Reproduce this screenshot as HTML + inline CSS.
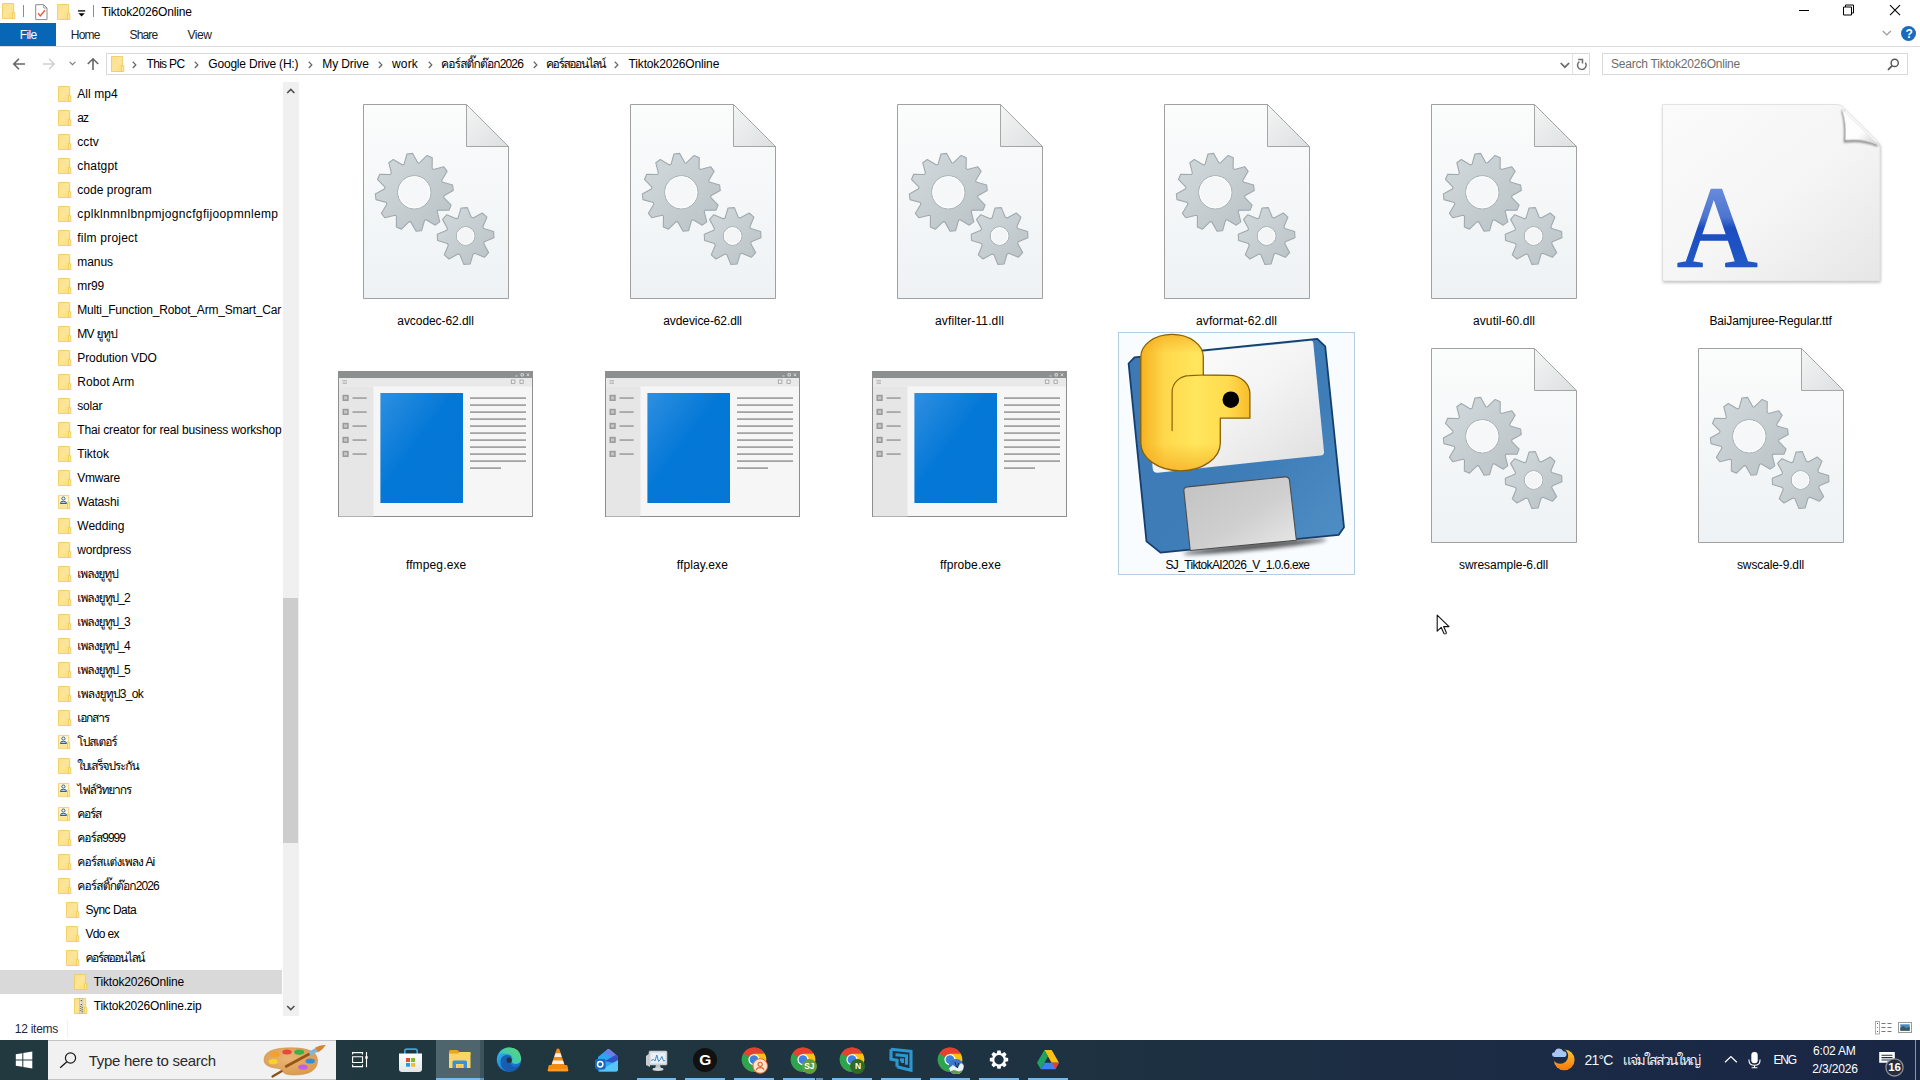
<!DOCTYPE html>
<html lang="en"><head><meta charset="utf-8"><title>Tiktok2026Online</title>
<style>
html,body{margin:0;padding:0}
body{width:1920px;height:1080px;overflow:hidden;background:#fff;position:relative;font-family:"Liberation Sans","Loma","Noto Sans CJK SC",sans-serif;font-size:12px}
.t{position:absolute;white-space:pre;display:block}
.b{position:absolute;display:block;overflow:visible}
</style></head>
<body>

<svg width="0" height="0" style="position:absolute">
<defs>
<linearGradient id="gfold" x1="0" y1="0" x2="1" y2="1"><stop offset="0" stop-color="#fbe08a"/><stop offset=".5" stop-color="#fce59a"/><stop offset="1" stop-color="#f9dc7d"/></linearGradient>
<linearGradient id="gpage" x1="0" y1="0" x2="0" y2="1"><stop offset="0" stop-color="#fbfcfc"/><stop offset="1" stop-color="#eef2f4"/></linearGradient>
<linearGradient id="gfoldc" x1="0" y1="0" x2="1" y2="1"><stop offset="0" stop-color="#f4f5f5"/><stop offset="1" stop-color="#dcdfe0"/></linearGradient>
<linearGradient id="ggear" x1="0" y1="0" x2="1" y2="1"><stop offset="0" stop-color="#d3dadd"/><stop offset="1" stop-color="#b9c2c6"/></linearGradient>
<linearGradient id="gblue" x1="0" y1="0" x2="1" y2="1"><stop offset="0" stop-color="#2f8fe0"/><stop offset=".45" stop-color="#0478d7"/><stop offset="1" stop-color="#0576d4"/></linearGradient>
<symbol id="fold" viewBox="0 0 14 16"><path d="M.5.5h11.2v15H.5z" fill="url(#gfold)" stroke="#efcd63" stroke-width=".9"/><path d="M10.6 9.6h2.2v5.9h-2.2z" fill="#fdeaa5" stroke="#ecc652" stroke-width=".8"/></symbol>
</defs></svg>

<svg class="b" style="left:1.9px;top:3.2px" width="14" height="16"><use href="#fold"/></svg>
<div class="b" style="left:23px;top:5px;width:1px;height:12px;background:#8c8c8c;"></div>
<svg class="b" style="left:34.5px;top:3.5px;" width="13" height="17" viewBox="0 0 13 17"><path d="M.7.7h8l3.3 3.3v11.6H.7z" fill="#fff" stroke="#8a8a8a" stroke-width="1"/><path d="M8.7.7v3.3h3.3" fill="none" stroke="#8a8a8a" stroke-width=".8"/><path d="M3 9.3l2.3 2.6 4.6-5.6" fill="none" stroke="#e8603c" stroke-width="1.5"/></svg>
<svg class="b" style="left:57px;top:4px" width="14" height="16"><use href="#fold"/></svg>
<svg class="b" style="left:78px;top:9.5px;" width="8" height="7" viewBox="0 0 8 7"><path d="M0 .9h7.2" stroke="#000" stroke-width="1.3"/><path d="M.4 3.3h6.4L3.6 6.6z" fill="#000"/></svg>
<div class="b" style="left:93px;top:5px;width:1px;height:12px;background:#8c8c8c;"></div>
<span class="t" style="left:101.50px;top:2.64px;font-size:12px;line-height:18px;color:#000;letter-spacing:-0.166px;">Tiktok2026Online</span>
<svg class="b" style="left:1798px;top:4px;" width="12" height="12" viewBox="0 0 12 12"><path d="M1 6.5h10" stroke="#000" stroke-width="1"/></svg>
<svg class="b" style="left:1843px;top:4px;" width="12" height="12" viewBox="0 0 12 12"><path d="M.5 3h8v8h-8z" fill="none" stroke="#000" stroke-width="1"/><path d="M2.5 3V1h8v8h-2" fill="none" stroke="#000" stroke-width="1"/></svg>
<svg class="b" style="left:1889px;top:4px;" width="12" height="12" viewBox="0 0 12 12"><path d="M1 1.2l10 10M11 1.2l-10 10" stroke="#000" stroke-width="1.1"/></svg>
<div class="b" style="left:0px;top:23px;width:56px;height:23px;background:#0766b5;"></div>
<span class="t" style="left:19.80px;top:26.24px;font-size:12px;line-height:18px;color:#fff;letter-spacing:-0.636px;">File</span>
<span class="t" style="left:70.80px;top:26.24px;font-size:12px;line-height:18px;color:#222;letter-spacing:-0.829px;">Home</span>
<span class="t" style="left:129.50px;top:26.24px;font-size:12px;line-height:18px;color:#222;letter-spacing:-0.846px;">Share</span>
<span class="t" style="left:187.50px;top:26.24px;font-size:12px;line-height:18px;color:#222;letter-spacing:-0.449px;">View</span>
<div class="b" style="left:0px;top:46px;width:1920px;height:1px;background:#dadbdc;"></div>
<svg class="b" style="left:1882px;top:30px;" width="10" height="7" viewBox="0 0 10 7"><path d="M.8 1l4 4 4-4" fill="none" stroke="#9a9a9a" stroke-width="1.2"/></svg>
<div class="b" style="left:1901px;top:26px;width:15px;height:15px;border-radius:50%;background:#1a6bbf"></div>
<span class="t" style="left:1905.50px;top:24.84px;font-size:12px;line-height:18px;color:#fff;font-weight:700;">?</span>
<svg class="b" style="left:12px;top:57px;" width="14" height="14" viewBox="0 0 14 14"><path d="M13 7H2M7 1.8L1.8 7 7 12.2" fill="none" stroke="#666" stroke-width="1.600"/></svg>
<svg class="b" style="left:42px;top:57px;" width="14" height="14" viewBox="0 0 14 14"><path d="M1 7h11M7 1.8L12.2 7 7 12.2" fill="none" stroke="#d0d0d0" stroke-width="1.4"/></svg>
<svg class="b" style="left:69px;top:61px;" width="7" height="5" viewBox="0 0 7 5"><path d="M.6.8l2.9 2.9L6.4.8" fill="none" stroke="#7a7a7a" stroke-width="1.1"/></svg>
<svg class="b" style="left:86px;top:57px;" width="14" height="14" viewBox="0 0 14 14"><path d="M7 13V2M1.8 7L7 1.8 12.2 7" fill="none" stroke="#666" stroke-width="1.600"/></svg>
<div class="b" style="left:106px;top:53px;width:1484px;height:22px;background:#fff;border:1px solid #d9d9d9;box-sizing:border-box;"></div>
<div class="b" style="left:1572px;top:54px;width:1px;height:20px;background:#e3e3e3;"></div>
<svg class="b" style="left:111px;top:55.5px" width="14" height="16"><use href="#fold"/></svg>
<svg class="b" style="left:132px;top:61px;" width="5" height="8" viewBox="0 0 5 8"><path d="M.8.8l3 3.1-3 3.1" fill="none" stroke="#666" stroke-width="1.300"/></svg>
<span class="t" style="left:146.50px;top:55.04px;font-size:12px;line-height:18px;color:#000;letter-spacing:-0.684px;">This PC</span>
<svg class="b" style="left:194px;top:61px;" width="5" height="8" viewBox="0 0 5 8"><path d="M.8.8l3 3.1-3 3.1" fill="none" stroke="#666" stroke-width="1.300"/></svg>
<span class="t" style="left:208.30px;top:55.04px;font-size:12px;line-height:18px;color:#000;letter-spacing:-0.198px;">Google Drive (H:)</span>
<svg class="b" style="left:308px;top:61px;" width="5" height="8" viewBox="0 0 5 8"><path d="M.8.8l3 3.1-3 3.1" fill="none" stroke="#666" stroke-width="1.300"/></svg>
<span class="t" style="left:322.30px;top:55.04px;font-size:12px;line-height:18px;color:#000;letter-spacing:-0.105px;">My Drive</span>
<svg class="b" style="left:378px;top:61px;" width="5" height="8" viewBox="0 0 5 8"><path d="M.8.8l3 3.1-3 3.1" fill="none" stroke="#666" stroke-width="1.300"/></svg>
<span class="t" style="left:392.00px;top:55.04px;font-size:12px;line-height:18px;color:#000;letter-spacing:0.164px;">work</span>
<svg class="b" style="left:427.5px;top:61px;" width="5" height="8" viewBox="0 0 5 8"><path d="M.8.8l3 3.1-3 3.1" fill="none" stroke="#666" stroke-width="1.300"/></svg>
<span class="t" style="left:441.00px;top:55.04px;font-size:12px;line-height:18px;color:#000;letter-spacing:-0.849px;">คอร์สติ๊กต๊อก2026</span>
<svg class="b" style="left:532.5px;top:61px;" width="5" height="8" viewBox="0 0 5 8"><path d="M.8.8l3 3.1-3 3.1" fill="none" stroke="#666" stroke-width="1.300"/></svg>
<span class="t" style="left:546.00px;top:55.04px;font-size:12px;line-height:18px;color:#000;letter-spacing:-1.422px;">คอร์สออนไลน์</span>
<svg class="b" style="left:614px;top:61px;" width="5" height="8" viewBox="0 0 5 8"><path d="M.8.8l3 3.1-3 3.1" fill="none" stroke="#666" stroke-width="1.300"/></svg>
<span class="t" style="left:628.50px;top:55.04px;font-size:12px;line-height:18px;color:#000;letter-spacing:-0.141px;">Tiktok2026Online</span>
<svg class="b" style="left:1560px;top:61px;" width="10" height="8" viewBox="0 0 10 8"><path d="M.7 2l4.200 4.200L9.100 2" fill="none" stroke="#6a6a6a" stroke-width="1.700"/></svg>
<svg class="b" style="left:1575px;top:56px;" width="14" height="16" viewBox="1575 56 14 16"><path d="M1585.300 62.600A4.300 4.300 0 1 1 1579.400 61.600" fill="none" stroke="#717171" stroke-width="1.500"/><path d="M1578.100 59.500H1582.500V63.400" fill="none" stroke="#717171" stroke-width="1.500"/></svg>
<div class="b" style="left:1602px;top:53px;width:306px;height:22px;background:#fff;border:1px solid #d9d9d9;box-sizing:border-box;"></div>
<span class="t" style="left:1611.00px;top:55.04px;font-size:12px;line-height:18px;color:#6d6d6d;letter-spacing:-0.221px;">Search Tiktok2026Online</span>
<svg class="b" style="left:1887px;top:58px;" width="13" height="13" viewBox="0 0 13 13"><circle cx="7.7" cy="4.9" r="3.6" fill="none" stroke="#555" stroke-width="1.4"/><path d="M5.2 7.6L1 11.8" stroke="#555" stroke-width="1.7"/></svg>
<div class="b" style="left:0px;top:970px;width:282px;height:23.6px;background:#d9d9d9;"></div>
<svg class="b" style="left:58px;top:86px" width="14" height="16"><use href="#fold"/></svg>
<span class="t" style="left:77.30px;top:84.64px;font-size:12px;line-height:18px;color:#000;letter-spacing:0.069px;">All mp4</span>
<svg class="b" style="left:58px;top:110px" width="14" height="16"><use href="#fold"/></svg>
<span class="t" style="left:77.30px;top:108.64px;font-size:12px;line-height:18px;color:#000;letter-spacing:-1.094px;">az</span>
<svg class="b" style="left:58px;top:134px" width="14" height="16"><use href="#fold"/></svg>
<span class="t" style="left:77.30px;top:132.64px;font-size:12px;line-height:18px;color:#000;letter-spacing:0.064px;">cctv</span>
<svg class="b" style="left:58px;top:158px" width="14" height="16"><use href="#fold"/></svg>
<span class="t" style="left:77.30px;top:156.64px;font-size:12px;line-height:18px;color:#000;letter-spacing:0.161px;">chatgpt</span>
<svg class="b" style="left:58px;top:182px" width="14" height="16"><use href="#fold"/></svg>
<span class="t" style="left:77.30px;top:180.64px;font-size:12px;line-height:18px;color:#000;letter-spacing:0.038px;">code program</span>
<svg class="b" style="left:58px;top:206px" width="14" height="16"><use href="#fold"/></svg>
<span class="t" style="left:77.30px;top:204.64px;font-size:12px;line-height:18px;color:#000;letter-spacing:0.343px;">cplklnmnlbnpmjogncfgfijoopmnlemp</span>
<svg class="b" style="left:58px;top:230px" width="14" height="16"><use href="#fold"/></svg>
<span class="t" style="left:77.30px;top:228.64px;font-size:12px;line-height:18px;color:#000;letter-spacing:0.207px;">film project</span>
<svg class="b" style="left:58px;top:254px" width="14" height="16"><use href="#fold"/></svg>
<span class="t" style="left:77.30px;top:252.64px;font-size:12px;line-height:18px;color:#000;letter-spacing:-0.086px;">manus</span>
<svg class="b" style="left:58px;top:278px" width="14" height="16"><use href="#fold"/></svg>
<span class="t" style="left:77.30px;top:276.64px;font-size:12px;line-height:18px;color:#000;letter-spacing:-0.161px;">mr99</span>
<svg class="b" style="left:58px;top:302px" width="14" height="16"><use href="#fold"/></svg>
<span class="t" style="left:77.30px;top:300.64px;font-size:12px;line-height:18px;color:#000;letter-spacing:-0.185px;">Multi_Function_Robot_Arm_Smart_Car</span>
<svg class="b" style="left:58px;top:326px" width="14" height="16"><use href="#fold"/></svg>
<span class="t" style="left:77.30px;top:324.64px;font-size:12px;line-height:18px;color:#000;letter-spacing:-0.684px;">MV ยูทูป</span>
<svg class="b" style="left:58px;top:350px" width="14" height="16"><use href="#fold"/></svg>
<span class="t" style="left:77.30px;top:348.64px;font-size:12px;line-height:18px;color:#000;letter-spacing:-0.101px;">Prodution VDO</span>
<svg class="b" style="left:58px;top:374px" width="14" height="16"><use href="#fold"/></svg>
<span class="t" style="left:77.30px;top:372.64px;font-size:12px;line-height:18px;color:#000;letter-spacing:0.044px;">Robot Arm</span>
<svg class="b" style="left:58px;top:398px" width="14" height="16"><use href="#fold"/></svg>
<span class="t" style="left:77.30px;top:396.64px;font-size:12px;line-height:18px;color:#000;letter-spacing:-0.223px;">solar</span>
<svg class="b" style="left:58px;top:422px" width="14" height="16"><use href="#fold"/></svg>
<span class="t" style="left:77.30px;top:420.64px;font-size:12px;line-height:18px;color:#000;letter-spacing:-0.151px;">Thai creator for real business workshop</span>
<svg class="b" style="left:58px;top:446px" width="14" height="16"><use href="#fold"/></svg>
<span class="t" style="left:77.30px;top:444.64px;font-size:12px;line-height:18px;color:#000;letter-spacing:0.006px;">Tiktok</span>
<svg class="b" style="left:58px;top:470px" width="14" height="16"><use href="#fold"/></svg>
<span class="t" style="left:77.30px;top:468.64px;font-size:12px;line-height:18px;color:#000;letter-spacing:-0.219px;">Vmware</span>
<svg class="b" style="left:58px;top:494.7px;" width="14" height="15" viewBox="0 0 14 15"><path d="M.5.5h10.300v13.100H.5z" fill="#fdf5d3" stroke="#f0d06c" stroke-width=".9"/><path d="M.9 9.300h9.500v3.900H.9z" fill="#fbe596"/><path d="M9.500 7.400h2.200v6.200H9.500z" fill="#fce9a3" stroke="#ecc652" stroke-width=".8"/><circle cx="5.400" cy="3.500" r="1.550" fill="#f2f8ff" stroke="#3d5878" stroke-width=".95"/><path d="M2.300 8.500Q2.300 6.300 5.400 6.300Q8.600 6.300 8.600 8.500z" fill="#a8d3f7" stroke="#2f5a8a" stroke-width=".95" stroke-linejoin="round"/></svg>
<span class="t" style="left:77.30px;top:492.64px;font-size:12px;line-height:18px;color:#000;letter-spacing:-0.187px;">Watashi</span>
<svg class="b" style="left:58px;top:518px" width="14" height="16"><use href="#fold"/></svg>
<span class="t" style="left:77.30px;top:516.64px;font-size:12px;line-height:18px;color:#000;letter-spacing:-0.008px;">Wedding</span>
<svg class="b" style="left:58px;top:542px" width="14" height="16"><use href="#fold"/></svg>
<span class="t" style="left:77.30px;top:540.64px;font-size:12px;line-height:18px;color:#000;letter-spacing:-0.173px;">wordpress</span>
<svg class="b" style="left:58px;top:566px" width="14" height="16"><use href="#fold"/></svg>
<span class="t" style="left:77.30px;top:564.64px;font-size:12px;line-height:18px;color:#000;letter-spacing:-1.042px;">เพลงยูทูป</span>
<svg class="b" style="left:58px;top:590px" width="14" height="16"><use href="#fold"/></svg>
<span class="t" style="left:77.30px;top:588.64px;font-size:12px;line-height:18px;color:#000;letter-spacing:-0.982px;">เพลงยูทูป_2</span>
<svg class="b" style="left:58px;top:614px" width="14" height="16"><use href="#fold"/></svg>
<span class="t" style="left:77.30px;top:612.64px;font-size:12px;line-height:18px;color:#000;letter-spacing:-0.982px;">เพลงยูทูป_3</span>
<svg class="b" style="left:58px;top:638px" width="14" height="16"><use href="#fold"/></svg>
<span class="t" style="left:77.30px;top:636.64px;font-size:12px;line-height:18px;color:#000;letter-spacing:-0.982px;">เพลงยูทูป_4</span>
<svg class="b" style="left:58px;top:662px" width="14" height="16"><use href="#fold"/></svg>
<span class="t" style="left:77.30px;top:660.64px;font-size:12px;line-height:18px;color:#000;letter-spacing:-0.982px;">เพลงยูทูป_5</span>
<svg class="b" style="left:58px;top:686px" width="14" height="16"><use href="#fold"/></svg>
<span class="t" style="left:77.30px;top:684.64px;font-size:12px;line-height:18px;color:#000;letter-spacing:-0.747px;">เพลงยูทูป3_ok</span>
<svg class="b" style="left:58px;top:710px" width="14" height="16"><use href="#fold"/></svg>
<span class="t" style="left:77.30px;top:708.64px;font-size:12px;line-height:18px;color:#000;letter-spacing:-1.249px;">เอกสาร</span>
<svg class="b" style="left:58px;top:734.7px;" width="14" height="15" viewBox="0 0 14 15"><path d="M.5.5h10.300v13.100H.5z" fill="#fdf5d3" stroke="#f0d06c" stroke-width=".9"/><path d="M.9 9.300h9.500v3.900H.9z" fill="#fbe596"/><path d="M9.500 7.400h2.200v6.200H9.500z" fill="#fce9a3" stroke="#ecc652" stroke-width=".8"/><circle cx="5.400" cy="3.500" r="1.550" fill="#f2f8ff" stroke="#3d5878" stroke-width=".95"/><path d="M2.300 8.500Q2.300 6.300 5.400 6.300Q8.600 6.300 8.600 8.500z" fill="#a8d3f7" stroke="#2f5a8a" stroke-width=".95" stroke-linejoin="round"/></svg>
<span class="t" style="left:77.30px;top:732.64px;font-size:12px;line-height:18px;color:#000;letter-spacing:-1.077px;">โปสเตอร์</span>
<svg class="b" style="left:58px;top:758px" width="14" height="16"><use href="#fold"/></svg>
<span class="t" style="left:77.30px;top:756.64px;font-size:12px;line-height:18px;color:#000;letter-spacing:-1.205px;">ใบเสร็จประกัน</span>
<svg class="b" style="left:58px;top:782.7px;" width="14" height="15" viewBox="0 0 14 15"><path d="M.5.5h10.300v13.100H.5z" fill="#fdf5d3" stroke="#f0d06c" stroke-width=".9"/><path d="M.9 9.300h9.500v3.900H.9z" fill="#fbe596"/><path d="M9.500 7.400h2.200v6.200H9.500z" fill="#fce9a3" stroke="#ecc652" stroke-width=".8"/><circle cx="5.400" cy="3.500" r="1.550" fill="#f2f8ff" stroke="#3d5878" stroke-width=".95"/><path d="M2.300 8.500Q2.300 6.300 5.400 6.300Q8.600 6.300 8.600 8.500z" fill="#a8d3f7" stroke="#2f5a8a" stroke-width=".95" stroke-linejoin="round"/></svg>
<span class="t" style="left:77.30px;top:780.64px;font-size:12px;line-height:18px;color:#000;letter-spacing:-1.135px;">ไฟล์วิทยากร</span>
<svg class="b" style="left:58px;top:806.7px;" width="14" height="15" viewBox="0 0 14 15"><path d="M.5.5h10.300v13.100H.5z" fill="#fdf5d3" stroke="#f0d06c" stroke-width=".9"/><path d="M.9 9.300h9.500v3.900H.9z" fill="#fbe596"/><path d="M9.500 7.400h2.200v6.200H9.500z" fill="#fce9a3" stroke="#ecc652" stroke-width=".8"/><circle cx="5.400" cy="3.500" r="1.550" fill="#f2f8ff" stroke="#3d5878" stroke-width=".95"/><path d="M2.300 8.500Q2.300 6.300 5.400 6.300Q8.600 6.300 8.600 8.500z" fill="#a8d3f7" stroke="#2f5a8a" stroke-width=".95" stroke-linejoin="round"/></svg>
<span class="t" style="left:77.30px;top:804.64px;font-size:12px;line-height:18px;color:#000;letter-spacing:-1.304px;">คอร์ส</span>
<svg class="b" style="left:58px;top:830px" width="14" height="16"><use href="#fold"/></svg>
<span class="t" style="left:77.30px;top:828.64px;font-size:12px;line-height:18px;color:#000;letter-spacing:-1.013px;">คอร์ส9999</span>
<svg class="b" style="left:58px;top:854px" width="14" height="16"><use href="#fold"/></svg>
<span class="t" style="left:77.30px;top:852.64px;font-size:12px;line-height:18px;color:#000;letter-spacing:-0.895px;">คอร์สแต่งเพลง Ai</span>
<svg class="b" style="left:58px;top:878px" width="14" height="16"><use href="#fold"/></svg>
<span class="t" style="left:77.30px;top:876.64px;font-size:12px;line-height:18px;color:#000;letter-spacing:-0.879px;">คอร์สติ๊กต๊อก2026</span>
<svg class="b" style="left:66px;top:902px" width="14" height="16"><use href="#fold"/></svg>
<span class="t" style="left:85.50px;top:900.64px;font-size:12px;line-height:18px;color:#000;letter-spacing:-0.518px;">Sync Data</span>
<svg class="b" style="left:66px;top:926px" width="14" height="16"><use href="#fold"/></svg>
<span class="t" style="left:85.50px;top:924.64px;font-size:12px;line-height:18px;color:#000;letter-spacing:-0.660px;">Vdo ex</span>
<svg class="b" style="left:66px;top:950px" width="14" height="16"><use href="#fold"/></svg>
<span class="t" style="left:85.50px;top:948.64px;font-size:12px;line-height:18px;color:#000;letter-spacing:-1.472px;">คอร์สออนไลน์</span>
<svg class="b" style="left:74px;top:974px" width="14" height="16"><use href="#fold"/></svg>
<span class="t" style="left:93.70px;top:972.64px;font-size:12px;line-height:18px;color:#000;letter-spacing:-0.166px;">Tiktok2026Online</span>
<svg class="b" style="left:74px;top:997.9px;" width="14" height="16" viewBox="0 0 14 16"><path d="M.5.5h11.200v15H.5z" fill="url(#gfold)" stroke="#efcd63" stroke-width=".9"/><path d="M10.600 9.600h2.200v5.900h-2.200z" fill="#fdeaa5" stroke="#ecc652" stroke-width=".8"/><rect x="5.700" y=".3" width="3.200" height="15.300" fill="#e6e2d6" stroke="#b9ad8a" stroke-width=".5"/><circle cx="7.300" cy="2.600" r=".65" fill="#333"/><circle cx="7.300" cy="6.600" r=".65" fill="#333"/><rect x="6.2" y="8.20" width="1.100" height=".8" fill="#3a3a3a"/><rect x="7.6" y="9.25" width="1.100" height=".8" fill="#3a3a3a"/><rect x="6.2" y="10.30" width="1.100" height=".8" fill="#3a3a3a"/><rect x="7.6" y="11.35" width="1.100" height=".8" fill="#3a3a3a"/><rect x="6.2" y="12.40" width="1.100" height=".8" fill="#3a3a3a"/><rect x="7.6" y="13.45" width="1.100" height=".8" fill="#3a3a3a"/></svg>
<span class="t" style="left:93.70px;top:996.64px;font-size:12px;line-height:18px;color:#000;letter-spacing:-0.186px;">Tiktok2026Online.zip</span>
<div class="b" style="left:282px;top:82px;width:40px;height:936px;background:#fff;"></div>
<div class="b" style="left:283px;top:82px;width:16px;height:934px;background:#f0f0f0;"></div>
<div class="b" style="left:283px;top:598px;width:15px;height:245px;background:#cdcdcd;"></div>
<svg class="b" style="left:286px;top:87px;" width="10" height="8" viewBox="0 0 10 8"><path d="M1.2 6l3.6-3.6L8.4 6" fill="none" stroke="#505050" stroke-width="1.6"/></svg>
<svg class="b" style="left:286px;top:1004px;" width="10" height="8" viewBox="0 0 10 8"><path d="M1.2 2l3.6 3.6L8.4 2" fill="none" stroke="#505050" stroke-width="1.6"/></svg>
<span class="t" style="left:14.80px;top:1019.84px;font-size:12px;line-height:18px;color:#1f2540;letter-spacing:-0.257px;">12 items</span>
<div class="b" style="left:67px;top:1020px;width:1px;height:17px;background:#f0f0f0;"></div>
<svg class="b" style="left:1875px;top:1021px;" width="17" height="14" viewBox="0 0 17 14"><rect x=".5" y=".5" width="4" height="12.5" fill="#fff" stroke="#9a9a9a" stroke-width=".8"/><path d="M6.5 2.5h4M12.5 2.5h4M6.5 6.5h4M12.5 6.5h4M6.5 10.5h4M12.5 10.5h4" stroke="#777" stroke-width="1.2"/><rect x="2" y="2" width="1" height="1" fill="#555"/><rect x="2" y="6" width="1" height="1" fill="#6a9"/><rect x="2" y="10" width="1" height="1" fill="#a44"/></svg>
<svg class="b" style="left:1898px;top:1022px;" width="14" height="11" viewBox="0 0 14 11"><rect x=".5" y=".5" width="13" height="10" fill="#fff" stroke="#9a9a9a" stroke-width="1"/><rect x="2.3" y="2.3" width="9.4" height="6.4" fill="#4a88c2"/><path d="M2.3 8.7V6l3-2 3 2.2 3.4-1.5v4z" fill="#3c5a5c"/></svg>
<svg width="0" height="0" style="position:absolute"><defs><symbol id="dll" viewBox="0 0 147 196" overflow="visible">
<path d="M.5.5H103.5L145.5 42.5V194.5H.5z" fill="url(#gpage)" stroke="#a0a0a0" stroke-width="1"/>
<path d="M103.5.5V42.5H145.5z" fill="url(#gfoldc)" stroke="#a6a6a6" stroke-width="1" stroke-linejoin="round"/>
<path d="M41.03 60.33L43.98 49.99L49.54 49.34L54.81 58.71A29.8 29.8 0 0 1 56.39 58.94L64.12 51.47L69.26 53.68L69.13 64.43A29.8 29.8 0 0 1 70.39 65.42L80.82 62.81L84.16 67.30L78.68 76.54A29.8 29.8 0 0 1 79.27 78.03L89.61 80.98L90.26 86.54L80.89 91.81A29.8 29.8 0 0 1 80.66 93.39L88.13 101.12L85.92 106.26L75.17 106.13A29.8 29.8 0 0 1 74.18 107.39L76.79 117.82L72.30 121.16L63.06 115.68A29.8 29.8 0 0 1 61.57 116.27L58.62 126.61L53.06 127.26L47.79 117.89A29.8 29.8 0 0 1 46.21 117.66L38.48 125.13L33.34 122.92L33.47 112.17A29.8 29.8 0 0 1 32.21 111.18L21.78 113.79L18.44 109.30L23.92 100.06A29.8 29.8 0 0 1 23.33 98.57L12.99 95.62L12.34 90.06L21.71 84.79A29.8 29.8 0 0 1 21.94 83.21L14.47 75.48L16.68 70.34L27.43 70.47A29.8 29.8 0 0 1 28.42 69.21L25.81 58.78L30.30 55.44L39.54 60.92A29.8 29.8 0 0 1 41.03 60.33Z" fill="url(#ggear)" stroke="#a0a9ad" stroke-width="1.1" stroke-linejoin="round"/>
<circle cx="51.3" cy="88.3" r="16.6" fill="#f5f7f8" stroke="#a7b0b4" stroke-width="1"/>
<circle cx="51.3" cy="88.3" r="15.6" fill="none" stroke="#fff" stroke-width="1"/>
<path d="M95.14 113.88L98.08 103.96L104.36 103.65L108.26 113.24A19.6 19.6 0 0 1 110.14 113.91L119.23 108.98L123.89 113.20L119.87 122.73A19.6 19.6 0 0 1 120.72 124.54L130.64 127.48L130.95 133.76L121.36 137.66A19.6 19.6 0 0 1 120.69 139.54L125.62 148.63L121.40 153.29L111.87 149.27A19.6 19.6 0 0 1 110.06 150.12L107.12 160.04L100.84 160.35L96.94 150.76A19.6 19.6 0 0 1 95.06 150.09L85.97 155.02L81.31 150.80L85.33 141.27A19.6 19.6 0 0 1 84.48 139.46L74.56 136.52L74.25 130.24L83.84 126.34A19.6 19.6 0 0 1 84.51 124.46L79.58 115.37L83.80 110.71L93.33 114.73A19.6 19.6 0 0 1 95.14 113.88Z" fill="url(#ggear)" stroke="#a0a9ad" stroke-width="1.1" stroke-linejoin="round"/>
<circle cx="102.6" cy="132" r="9.3" fill="#f3f5f6" stroke="#a7b0b4" stroke-width="1"/>
<circle cx="102.6" cy="132" r="8.3" fill="none" stroke="#fff" stroke-width="1"/>
</symbol><symbol id="exe" viewBox="0 0 195 146" overflow="visible">
<rect x=".5" y=".5" width="194" height="145" fill="#f6f6f6" stroke="#8e8e8e" stroke-width="1"/>
<rect x="1" y="1" width="193" height="6" fill="#8c8f90"/>
<rect x="1" y="7" width="193" height="8.4" fill="#e9e9e9"/>
<rect x="1" y="15.4" width="34.5" height="130" fill="#e6e6e6"/>
<rect x="42.4" y="22" width="82.6" height="110" fill="url(#gblue)"/>
<rect x="132" y="26.3" width="56" height="1.6" fill="#9b9b9b"/><rect x="132" y="33.3" width="56" height="1.6" fill="#9b9b9b"/><rect x="132" y="40.3" width="56" height="1.6" fill="#9b9b9b"/><rect x="132" y="47.3" width="56" height="1.6" fill="#9b9b9b"/><rect x="132" y="54.3" width="56" height="1.6" fill="#9b9b9b"/><rect x="132" y="61.3" width="56" height="1.6" fill="#9b9b9b"/><rect x="132" y="68.3" width="56" height="1.6" fill="#9b9b9b"/><rect x="132" y="75.3" width="56" height="1.6" fill="#9b9b9b"/><rect x="132" y="82.3" width="56" height="1.6" fill="#9b9b9b"/><rect x="132" y="89.3" width="56" height="1.6" fill="#9b9b9b"/><rect x="132" y="96.3" width="31" height="1.6" fill="#9b9b9b"/><rect x="5.3" y="24.6" width="4.6" height="4.6" fill="#c9c9c9" stroke="#9b9b9b" stroke-width="1.6"/><rect x="14.5" y="26.3" width="14.2" height="1.5" fill="#9b9b9b"/><rect x="5.3" y="38.6" width="4.6" height="4.6" fill="#c9c9c9" stroke="#9b9b9b" stroke-width="1.6"/><rect x="14.5" y="40.3" width="14.2" height="1.5" fill="#9b9b9b"/><rect x="5.3" y="52.6" width="4.6" height="4.6" fill="#c9c9c9" stroke="#9b9b9b" stroke-width="1.6"/><rect x="14.5" y="54.3" width="14.2" height="1.5" fill="#9b9b9b"/><rect x="5.3" y="66.6" width="4.6" height="4.6" fill="#c9c9c9" stroke="#9b9b9b" stroke-width="1.6"/><rect x="14.5" y="68.3" width="14.2" height="1.5" fill="#9b9b9b"/><rect x="5.3" y="80.6" width="4.6" height="4.6" fill="#c9c9c9" stroke="#9b9b9b" stroke-width="1.6"/><rect x="14.5" y="82.3" width="14.2" height="1.5" fill="#9b9b9b"/>
<path d="M4.5 9.5h4.5M4.5 11h4.5M4.5 12.5h4.5" stroke="#aaa" stroke-width=".7"/>
<rect x="173.3" y="9" width="3.6" height="3.3" fill="#f4f4f4" stroke="#999" stroke-width=".8"/><rect x="182" y="9" width="3.2" height="3.3" fill="#f4f4f4" stroke="#999" stroke-width=".8"/>
<path d="M177.5 5h2M183 2.6h2.4v2.4H183zM188.6 2.4l2.6 2.8M191.2 2.4l-2.6 2.8" stroke="#e4e4e4" stroke-width=".8" fill="none"/>
</symbol></defs></svg>
<svg class="b" style="left:363.0px;top:104px" width="147" height="196"><use href="#dll"/></svg>
<svg class="b" style="left:630.0px;top:104px" width="147" height="196"><use href="#dll"/></svg>
<svg class="b" style="left:897.0px;top:104px" width="147" height="196"><use href="#dll"/></svg>
<svg class="b" style="left:1164.0px;top:104px" width="147" height="196"><use href="#dll"/></svg>
<svg class="b" style="left:1431.0px;top:104px" width="147" height="196"><use href="#dll"/></svg>
<svg class="b" style="left:1431.0px;top:348px" width="147" height="196"><use href="#dll"/></svg>
<svg class="b" style="left:1698.0px;top:348px" width="147" height="196"><use href="#dll"/></svg>
<svg class="b" style="left:338.0px;top:371px" width="195" height="146"><use href="#exe"/></svg>
<svg class="b" style="left:605.0px;top:371px" width="195" height="146"><use href="#exe"/></svg>
<svg class="b" style="left:872.0px;top:371px" width="195" height="146"><use href="#exe"/></svg>
<span class="t" style="left:397.30px;top:311.84px;font-size:12px;line-height:18px;color:#000;letter-spacing:-0.067px;">avcodec-62.dll</span>
<span class="t" style="left:663.30px;top:311.84px;font-size:12px;line-height:18px;color:#000;letter-spacing:-0.096px;">avdevice-62.dll</span>
<span class="t" style="left:935.00px;top:311.84px;font-size:12px;line-height:18px;color:#000;letter-spacing:0.124px;">avfilter-11.dll</span>
<span class="t" style="left:1196.00px;top:311.84px;font-size:12px;line-height:18px;color:#000;letter-spacing:0.108px;">avformat-62.dll</span>
<span class="t" style="left:1473.00px;top:311.84px;font-size:12px;line-height:18px;color:#000;letter-spacing:0.100px;">avutil-60.dll</span>
<span class="t" style="left:1709.40px;top:311.84px;font-size:12px;line-height:18px;color:#000;letter-spacing:-0.134px;">BaiJamjuree-Regular.ttf</span>
<div class="b" style="left:1118px;top:332px;width:237px;height:242.5px;background:#f8fcff;border:1px solid #b4cde2;box-sizing:border-box;"></div>
<span class="t" style="left:405.90px;top:556.04px;font-size:12px;line-height:18px;color:#000;letter-spacing:0.134px;">ffmpeg.exe</span>
<span class="t" style="left:676.80px;top:556.04px;font-size:12px;line-height:18px;color:#000;letter-spacing:0.093px;">ffplay.exe</span>
<span class="t" style="left:940.00px;top:556.04px;font-size:12px;line-height:18px;color:#000;letter-spacing:0.107px;">ffprobe.exe</span>
<span class="t" style="left:1165.40px;top:556.04px;font-size:12px;line-height:18px;color:#000;letter-spacing:-0.630px;">SJ_TiktokAI2026_V_1.0.6.exe</span>
<span class="t" style="left:1459.00px;top:556.04px;font-size:12px;line-height:18px;color:#000;letter-spacing:-0.064px;">swresample-6.dll</span>
<span class="t" style="left:1737.00px;top:556.04px;font-size:12px;line-height:18px;color:#000;letter-spacing:-0.131px;">swscale-9.dll</span>
<svg class="b" style="left:1650px;top:95px" width="245" height="200" viewBox="1650 95 245 200">
<defs>
<linearGradient id="gttf" x1="0" y1="0" x2="1" y2="1"><stop offset="0" stop-color="#fbfbfb"/><stop offset=".55" stop-color="#f5f5f5"/><stop offset="1" stop-color="#e6e6e6"/></linearGradient>
<linearGradient id="gA" x1="0" y1="0" x2="0" y2="1"><stop offset="0" stop-color="#7fa0e2"/><stop offset=".42" stop-color="#4d74d0"/><stop offset=".5" stop-color="#1c4dc0"/><stop offset=".8" stop-color="#2058c6"/><stop offset="1" stop-color="#3f92dc"/></linearGradient>
<linearGradient id="gcurl" x1="0" y1="0" x2="1" y2="1"><stop offset="0" stop-color="#fff"/><stop offset=".6" stop-color="#fdfdfd"/><stop offset="1" stop-color="#cfcfcf"/></linearGradient>
<filter id="fsh" x="-10%" y="-10%" width="120%" height="125%"><feGaussianBlur stdDeviation="1.6"/></filter>
<filter id="fsh2" x="-30%" y="-30%" width="160%" height="160%"><feGaussianBlur stdDeviation="1.1"/></filter>
</defs>
<path d="M1663 106H1838L1880.5 146V282.5H1663z" fill="#7a7a7a" opacity=".55" filter="url(#fsh)"/>
<path d="M1662.5 104.5H1837Q1841 104.5 1844 107.5L1877 140.5Q1880 143.500 1880 147.5V281H1662.500z" fill="url(#gttf)" stroke="#dcdcdc" stroke-width=".8"/>
<path d="M1842.5 110.500Q1846.5 124 1845 141.500Q1862 139 1877.500 145.500" fill="none" stroke="#555" stroke-width="2.2" opacity=".75" filter="url(#fsh2)"/>
<path d="M1842.300 109.500Q1847 124 1845.700 139.800Q1862 137.500 1877.800 144.500z" fill="url(#gcurl)" stroke="#e2e2e2" stroke-width=".6"/>
<text x="1677" y="267.300" textLength="80.500" lengthAdjust="spacingAndGlyphs" font-family="'Liberation Serif',serif" font-weight="400" font-size="117" fill="url(#gA)" stroke="url(#gA)" stroke-width="1.500" stroke-linejoin="round">A</text>
</svg>
<svg class="b" style="left:1110px;top:325px" width="255" height="260" viewBox="1110 325 255 260">
<defs>
<linearGradient id="gfl" x1="0" y1="0" x2="1" y2="1"><stop offset="0" stop-color="#3b78b4"/><stop offset=".6" stop-color="#3f7db8"/><stop offset="1" stop-color="#5190c6"/></linearGradient>
<linearGradient id="glab" x1="0" y1="0" x2="1" y2="1"><stop offset="0" stop-color="#ffffff"/><stop offset=".5" stop-color="#f4f4f4"/><stop offset="1" stop-color="#dedede"/></linearGradient>
<linearGradient id="gsh" x1="0" y1="0" x2="1" y2="1"><stop offset="0" stop-color="#c2c2c2"/><stop offset=".55" stop-color="#cfcfcf"/><stop offset="1" stop-color="#e9e9e9"/></linearGradient>
<radialGradient id="gpy" cx=".5" cy=".45" r=".62"><stop offset="0" stop-color="#ffe85e"/><stop offset=".55" stop-color="#ffdc4e"/><stop offset="1" stop-color="#f6b421"/></radialGradient>
<linearGradient id="gpyb" x1="0" y1="0" x2="1" y2="0"><stop offset="0" stop-color="#f5b222"/><stop offset=".22" stop-color="#ffd84c"/><stop offset=".5" stop-color="#ffe65c"/><stop offset=".8" stop-color="#ffdb4f"/><stop offset="1" stop-color="#f8bd2b"/></linearGradient>
<linearGradient id="gpyv" x1="0" y1="0" x2="0" y2="1"><stop offset="0" stop-color="#f3a51c" stop-opacity=".6"/><stop offset=".14" stop-color="#f3a51c" stop-opacity="0"/><stop offset=".8" stop-color="#f3a51c" stop-opacity="0"/><stop offset="1" stop-color="#f3a51c" stop-opacity=".65"/></linearGradient>
<filter id="fbl" x="-20%" y="-200%" width="140%" height="500%"><feGaussianBlur stdDeviation="2.2"/></filter>
</defs>
<ellipse cx="1255" cy="546.500" rx="72" ry="3.200" fill="#000" opacity=".7" filter="url(#fbl)" transform="rotate(-5.600 1255 546.500)"/>
<path d="M1128.600 363.500L1134.500 357.300L1317.300 338.800L1325.200 346.300L1344 527.300L1338.800 534.800L1160.500 552.600L1146.500 541.400z" fill="url(#gfl)" stroke="#173f6e" stroke-width="1.800" stroke-linejoin="round"/>
<path d="M1143 357.500L1311 340.800Q1313 340.600 1313.200 342.600L1324 451.500Q1324.400 455 1320.800 455.400L1158 472.800Q1153.200 473.300 1152.700 468.500z" fill="url(#glab)"/>
<path d="M1187.500 486.900L1284.800 476.900Q1289 476.500 1289.500 480.500L1296.400 540.300L1190.200 550.500L1183.900 491Q1183.500 487.300 1187.500 486.900z" fill="url(#gsh)" stroke="#4c4c4c" stroke-width="1.100" stroke-linejoin="round"/>
<path d="M1140.800 357A31.250 22.600 0 0 1 1203.300 357V375L1229.500 375.300A20.400 18.500 0 0 1 1249.900 393.800V418.200H1220.300V443A39.750 27.800 0 0 1 1140.800 443z" fill="url(#gpyb)"/>
<path d="M1140.800 357A31.250 22.600 0 0 1 1203.300 357V375L1229.500 375.300A20.400 18.500 0 0 1 1249.900 393.800V418.200H1220.300V443A39.750 27.800 0 0 1 1140.800 443z" fill="url(#gpyv)" stroke="#8a6205" stroke-width="1.300" stroke-linejoin="round"/>
<path d="M1172.100 430.600V392A17.500 16.500 0 0 1 1189.600 375.600L1203.300 375" fill="none" stroke="#8a6205" stroke-width="1.200" stroke-linecap="round"/>
<circle cx="1230.800" cy="399.700" r="8.300" fill="#000"/>
</svg>
<div class="b" style="left:0px;top:1040px;width:1920px;height:40px;background:linear-gradient(90deg,#22393f 0%,#21373f 25%,#1e3341 50%,#1c2e43 70%,#1a2945 85%,#1a2744 100%);"></div>
<svg class="b" style="left:15px;top:1051px;" width="18" height="18" viewBox="0 0 18 18"><path d="M.8 3.200L7.300 2.200V8.500H.8zM8.300 2L17.300 .6V8.500H8.300zM.8 9.500H7.300V15.800L.8 14.800zM8.300 9.500H17.300V17.400L8.300 16z" fill="#fff"/></svg>
<div class="b" style="left:48px;top:1040px;width:288px;height:40px;background:#f1f1f1;border:0 solid #000;box-sizing:border-box;border-top:1px solid #c4c4c4;border-bottom:1px solid #c4c4c4;"></div>
<svg class="b" style="left:58px;top:1050px;" width="20" height="20" viewBox="0 0 20 20"><circle cx="12.500" cy="8" r="5.100" fill="none" stroke="#1a1a1a" stroke-width="1.200"/><path d="M8.900 11.700L2.200 17.800" stroke="#1a1a1a" stroke-width="1.300"/></svg>
<span class="t" style="left:88.70px;top:1049.80px;font-size:15px;line-height:22px;color:#2b2b2b;letter-spacing:-0.294px;">Type here to search</span>
<svg class="b" style="left:258px;top:1042px;" width="74" height="38" viewBox="258 1042 74 38"><defs><radialGradient id="gpal" cx=".45" cy=".4" r=".7"><stop offset="0" stop-color="#e9b676"/><stop offset="1" stop-color="#d9964b"/></radialGradient></defs>
<path d="M272.500 1076.500L284.500 1069.500" stroke="#8a4f18" stroke-width="2.200" stroke-linecap="round"/>
<path d="M264 1060Q264 1047.800 291 1047.800Q317.500 1047.800 317.500 1060.500Q317.500 1075 294 1075Q283 1075 282.500 1070.500Q281 1068.500 275 1068Q264 1066.500 264 1060z" fill="url(#gpal)" stroke="#d08f45" stroke-width=".6"/>
<ellipse cx="275.100" cy="1054.400" rx="4.700" ry="2.600" fill="#f6a02a"/><ellipse cx="287" cy="1052.100" rx="4.700" ry="2.500" fill="#e9473f"/><ellipse cx="299.200" cy="1052.100" rx="5" ry="2.600" fill="#35b24a"/>
<ellipse cx="273.200" cy="1061.700" rx="4.600" ry="2.600" fill="#f8d22a"/><ellipse cx="310.200" cy="1061" rx="4.700" ry="2.600" fill="#3a8bd6"/><ellipse cx="303" cy="1067.100" rx="4.800" ry="2.600" fill="#c45ee6"/>
<path d="M286 1066.500L311 1053" stroke="#96541a" stroke-width="2.600" stroke-linecap="round"/>
<path d="M309.500 1053.800L316.500 1049.900" stroke="#7fb6dc" stroke-width="4.400"/>
<path d="M315 1047.800Q320 1044.500 325.800 1045Q322.500 1050 318 1052.600z" fill="#d9822f"/></svg>
<svg class="b" style="left:350px;top:1050px;" width="20" height="20" viewBox="0 0 20 20"><g fill="none" stroke="#fff" stroke-width="1.100"><path d="M2.600 6.700h9.900v5.800H2.600z"/><path d="M2.600 4.600V2.600h9.900v2M2.600 14.600v2h9.900v-2"/><path d="M16.500 2v15.200"/></g><rect x="15.300" y="6.200" width="2.400" height="2.600" fill="#fff"/></svg>
<svg class="b" style="left:398px;top:1047px;" width="26" height="26" viewBox="0 0 26 26"><defs><linearGradient id="gst" x1="0" y1="0" x2="0" y2="1"><stop offset="0" stop-color="#ffffff"/><stop offset="1" stop-color="#e4e6e8"/></linearGradient></defs>
<path d="M6.800 8V4.200Q6.800 2.200 8.800 2.200H17.200Q19.200 2.200 19.200 4.200V8" fill="none" stroke="#3ea2dc" stroke-width="1.700"/>
<path d="M1 6.500H24V22Q24 25 21 25H4Q1 25 1 22z" fill="url(#gst)"/>
<rect x="8" y="11" width="4" height="4" fill="#e8502a"/><rect x="13.100" y="11" width="4" height="4" fill="#7db928"/><rect x="8" y="16" width="4" height="3.700" fill="#1ea0e6"/><rect x="13.100" y="16" width="4" height="3.700" fill="#f5bb28"/></svg>
<div class="b" style="left:436px;top:1040px;width:44px;height:38px;background:#4e656d;"></div>
<div class="b" style="left:480px;top:1040px;width:4px;height:38px;background:#3d545e;"></div>
<div class="b" style="left:436px;top:1078px;width:44px;height:2px;background:#76b9ed;"></div>
<div class="b" style="left:480px;top:1078px;width:4px;height:2px;background:#5e93bd;"></div>
<svg class="b" style="left:448px;top:1049px;" width="24" height="20" viewBox="0 0 24 20"><path d="M1 2.500Q1 1 2.500 1H9.500L11.500 3H21Q22.500 3 22.500 4.500V6H1z" fill="#e3a820"/>
<path d="M1 4.500H10L12 3H22.500V19H1z" fill="#fbd565"/>
<path d="M4.500 19V13Q4.500 11.500 6 11.500H17.500Q19 11.500 19 13V19H15.600V15H8V19z" fill="#3b8fd6"/><rect x="9.400" y="16" width="4.800" height="3" fill="#f4c64c"/></svg>
<svg class="b" style="left:496px;top:1047px;" width="26" height="26" viewBox="0 0 26 26"><defs><linearGradient id="ged" x1="0" y1="0" x2="1" y2="1"><stop offset="0" stop-color="#36c2ee"/><stop offset=".6" stop-color="#1b7fd3"/><stop offset="1" stop-color="#1459b3"/></linearGradient>
<linearGradient id="ged2" x1="0" y1="1" x2="1" y2="0"><stop offset="0" stop-color="#2cc0e8"/><stop offset="1" stop-color="#5fd86a"/></linearGradient></defs>
<circle cx="13" cy="12.700" r="12.200" fill="url(#ged)"/>
<path d="M3 6.500Q7 .6 13.500 .6Q24 .9 25.200 11Q25.400 16.500 20 17Q15 17 16 13.500Q17.300 9 13 7.300Q7 6 3 6.500z" fill="url(#ged2)"/>
<path d="M4.500 14Q5 8.500 11 8Q15.500 8.300 15 12Q13 16.500 17 19.500Q20.500 21 23.500 18.500Q20 25.200 12 24.800Q4.500 22.500 4.500 14z" fill="#1557ad" opacity=".85"/>
<circle cx="13.200" cy="13.200" r="2.600" fill="#20333f"/></svg>
<svg class="b" style="left:546px;top:1047px;" width="24" height="26" viewBox="0 0 24 26"><path d="M12 1.500Q13.200 1.500 13.600 2.800L19 19H5L10.400 2.800Q10.800 1.500 12 1.500z" fill="#f7890c"/>
<path d="M9.600 6.300H14.400L15.700 10H8.300zM7.100 13.500H16.900L18.100 17H5.900z" fill="#f2f2f2"/>
<path d="M2.500 19Q2.500 18 4 18H20Q21.500 18 21.500 19L22.400 23.500Q22.400 24.500 21 24.500H3Q1.600 24.500 1.600 23.500z" fill="#f7890c"/><path d="M2 23h20" stroke="#fbb040" stroke-width="1"/></svg>
<svg class="b" style="left:594px;top:1047px;" width="26" height="26" viewBox="0 0 26 26"><path d="M4 10L13.500 2.300Q14.500 1.600 15.500 2.300L24 9.500V22.500Q24 24.500 22 24.500H6Q4 24.500 4 22.500z" fill="#2aa7ee"/>
<path d="M13.500 2.300Q14.500 1.600 15.500 2.300L24 9.500V13L10 6z" fill="#6d7ee8"/><path d="M11 14L22 7.800L24 9.500V17z" fill="#3352c9"/><path d="M4 24.500L24 13V22.500Q24 24.500 22 24.500z" fill="#55c6f7"/>
<rect x="1" y="12" width="10.500" height="10.500" rx="2" fill="#1666c0"/><circle cx="6.200" cy="17.200" r="2.700" fill="none" stroke="#fff" stroke-width="1.500"/></svg>
<svg class="b" style="left:644px;top:1048px;" width="26" height="26" viewBox="0 0 26 26"><path d="M2 8L6 5V19L2 17z" fill="#c9cdd1"/><rect x="5" y="3" width="18" height="14" rx="1" fill="#d9dde0" stroke="#b0b5b9" stroke-width=".6"/><rect x="6.800" y="4.800" width="14.400" height="10.400" fill="#e9f1f8"/>
<path d="M7 12.500l2.500-1 1.500 1.500 1.800-6 1.800 6.500 1.700-2 1.600-3 1.600 4.500 1.500-.5" fill="none" stroke="#3e86c8" stroke-width="1"/>
<path d="M12 17h4l1 3.500h-6z" fill="#bfc4c8"/><ellipse cx="14" cy="21.300" rx="5.500" ry="1.700" fill="#d4d7da"/></svg>
<div class="b" style="left:637px;top:1078px;width:39px;height:2px;background:#76b9ed;"></div>
<div class="b" style="left:685px;top:1078px;width:40px;height:2px;background:#76b9ed;"></div>
<div class="b" style="left:734px;top:1078px;width:40px;height:2px;background:#76b9ed;"></div>
<div class="b" style="left:832px;top:1078px;width:40px;height:2px;background:#76b9ed;"></div>
<div class="b" style="left:881px;top:1078px;width:40px;height:2px;background:#76b9ed;"></div>
<div class="b" style="left:930px;top:1078px;width:40px;height:2px;background:#76b9ed;"></div>
<div class="b" style="left:979px;top:1078px;width:40px;height:2px;background:#76b9ed;"></div>
<div class="b" style="left:1028px;top:1078px;width:40px;height:2px;background:#76b9ed;"></div>
<div class="b" style="left:783px;top:1078px;width:31.5px;height:2px;background:#76b9ed;"></div>
<div class="b" style="left:815.5px;top:1078px;width:7.5px;height:2px;background:#5e8fb6;"></div>
<div class="b" style="left:693px;top:1047.800px;width:24px;height:24px;border-radius:50%;background:#111"></div>
<span class="t" style="left:699.30px;top:1048.43px;font-size:15.5px;line-height:23px;color:#fff;font-weight:700;">G</span>
<svg class="b" style="left:741px;top:1047px;" width="26" height="26" viewBox="0 0 26 26"><circle cx="13" cy="12.600" r="12.200" fill="#e8402f"/>
<path d="M13 12.600L2.430 6.500A12.200 12.200 0 0 0 13 24.800L19 15.800z" fill="#2ea44f"/>
<path d="M13 24.800A12.200 12.200 0 0 0 23.570 6.500H13L19 15.800z" fill="#fbc016"/>
<path d="M2.430 6.500A12.200 12.200 0 0 1 23.570 6.500H13z" fill="#e8402f"/>
<circle cx="13" cy="12.600" r="5.600" fill="#fff"/><circle cx="13" cy="12.600" r="4.400" fill="#3f7fe6"/></svg>
<svg class="b" style="left:790px;top:1047px;" width="26" height="26" viewBox="0 0 26 26"><circle cx="13" cy="12.600" r="12.200" fill="#e8402f"/>
<path d="M13 12.600L2.430 6.500A12.200 12.200 0 0 0 13 24.800L19 15.800z" fill="#2ea44f"/>
<path d="M13 24.800A12.200 12.200 0 0 0 23.570 6.500H13L19 15.800z" fill="#fbc016"/>
<path d="M2.430 6.500A12.200 12.200 0 0 1 23.570 6.500H13z" fill="#e8402f"/>
<circle cx="13" cy="12.600" r="5.600" fill="#fff"/><circle cx="13" cy="12.600" r="4.400" fill="#3f7fe6"/></svg>
<svg class="b" style="left:839px;top:1047px;" width="26" height="26" viewBox="0 0 26 26"><circle cx="13" cy="12.600" r="12.200" fill="#e8402f"/>
<path d="M13 12.600L2.430 6.500A12.200 12.200 0 0 0 13 24.800L19 15.800z" fill="#2ea44f"/>
<path d="M13 24.800A12.200 12.200 0 0 0 23.570 6.500H13L19 15.800z" fill="#fbc016"/>
<path d="M2.430 6.500A12.200 12.200 0 0 1 23.570 6.500H13z" fill="#e8402f"/>
<circle cx="13" cy="12.600" r="5.600" fill="#fff"/><circle cx="13" cy="12.600" r="4.400" fill="#3f7fe6"/></svg>
<svg class="b" style="left:937px;top:1047px;" width="26" height="26" viewBox="0 0 26 26"><circle cx="13" cy="12.600" r="12.200" fill="#e8402f"/>
<path d="M13 12.600L2.430 6.500A12.200 12.200 0 0 0 13 24.800L19 15.800z" fill="#2ea44f"/>
<path d="M13 24.800A12.200 12.200 0 0 0 23.570 6.500H13L19 15.800z" fill="#fbc016"/>
<path d="M2.430 6.500A12.200 12.200 0 0 1 23.570 6.500H13z" fill="#e8402f"/>
<circle cx="13" cy="12.600" r="5.600" fill="#fff"/><circle cx="13" cy="12.600" r="4.400" fill="#3f7fe6"/></svg>
<svg class="b" style="left:752px;top:1058px;" width="17" height="17" viewBox="0 0 17 17"><circle cx="8.200" cy="8" r="7.300" fill="#fbe3d4" stroke="#e2662b" stroke-width="1"/><circle cx="8.200" cy="6.300" r="2.100" fill="none" stroke="#e2662b" stroke-width="1.100"/><path d="M4.300 12.300Q4.600 9.600 8.200 9.600Q11.800 9.600 12.100 12.300" fill="none" stroke="#e2662b" stroke-width="1.100"/></svg>
<div class="b" style="left:801.700px;top:1058.500px;width:15px;height:15px;border-radius:50%;background:#629f3c"></div>
<span class="t" style="left:804.30px;top:1059.85px;font-size:8.5px;line-height:13px;color:#fff;font-weight:700;letter-spacing:-0.203px;">SJ</span>
<div class="b" style="left:850.400px;top:1058.500px;width:15px;height:15px;border-radius:50%;background:#2f6b23"></div>
<span class="t" style="left:854.90px;top:1059.85px;font-size:8.5px;line-height:13px;color:#fff;font-weight:700;">N</span>
<svg class="b" style="left:948px;top:1058px;" width="17" height="17" viewBox="0 0 17 17"><defs><clipPath id="cpb"><circle cx="8.200" cy="8.600" r="7.500"/></clipPath></defs><g clip-path="url(#cpb)"><rect width="17" height="17" fill="#3a78c6"/><path d="M0 11l5-4 4 3 4-5 4 3v9H0z" fill="#e8f0f8"/><path d="M0 14l6-2 5 1.500 6-2V17H0z" fill="#5f9a4a"/><path d="M7 4l1.500 5M10.500 5l-1 5" stroke="#1a2a3a" stroke-width="1"/></g></svg>
<svg class="b" style="left:889px;top:1047px;" width="24" height="26" viewBox="0 0 24 26"><g fill="none" stroke="#2b97d3" stroke-width="3.100" stroke-linejoin="miter"><path d="M2 2.300L22 4.300V23.300L8 19.800"/><path d="M2 2.300V12.300L8 13.300V19.800"/><path d="M6.500 7.800L17.500 8.800V17.800"/><path d="M11 12.800L13.500 13V16"/></g></svg>
<svg class="b" style="left:988px;top:1049px;" width="22" height="22" viewBox="0 0 22 22"><path d="M8.84 4.15L9.41 1.54L12.59 1.54L13.16 4.15A6.9 6.9 0 0 1 14.10 4.54L16.35 3.10L18.60 5.35L17.16 7.60A6.9 6.9 0 0 1 17.55 8.54L20.16 9.11L20.16 12.29L17.55 12.86A6.9 6.9 0 0 1 17.16 13.80L18.60 16.05L16.35 18.30L14.10 16.86A6.9 6.9 0 0 1 13.16 17.25L12.59 19.86L9.41 19.86L8.84 17.25A6.9 6.9 0 0 1 7.90 16.86L5.65 18.30L3.40 16.05L4.84 13.80A6.9 6.9 0 0 1 4.45 12.86L1.84 12.29L1.84 9.11L4.45 8.54A6.9 6.9 0 0 1 4.84 7.60L3.40 5.35L5.65 3.10L7.90 4.54A6.9 6.9 0 0 1 8.84 4.15ZM11 6A4.700 4.700 0 1 0 11 15.400A4.700 4.700 0 1 0 11 6z" fill="#fff" fill-rule="evenodd"/></svg>
<svg class="b" style="left:1036px;top:1049px;" width="24" height="22" viewBox="0 0 24 22"><path d="M8.300 1H15.700L23 13.700H15.600z" fill="#fbc016"/><path d="M8.300 1L1 13.700L4.700 20.200L12 7.400z" fill="#1ea362"/><path d="M4.700 20.200H19.300L23 13.700H8.400z" fill="#3b82f0"/><path d="M15.600 13.700H23L19.300 20.200z" fill="#e8402f"/></svg>
<svg class="b" style="left:1551px;top:1047px;" width="26" height="26" viewBox="0 0 26 26"><defs><linearGradient id="gmoon" x1="0" y1="0" x2="0" y2="1"><stop offset="0" stop-color="#fcc62f"/><stop offset="1" stop-color="#f47a12"/></linearGradient></defs>
<circle cx="13.200" cy="12.800" r="10.400" fill="url(#gmoon)"/><circle cx="9.200" cy="8.800" r="8" fill="#1c2c45"/>
<path d="M3.500 10Q1 10 1 7.600Q1 5.300 3.600 5.300Q4.300 1.500 8 1.500Q11 1.500 12.300 4.300Q15.500 4.300 15.500 7.200Q15.500 10 12.800 10z" fill="#a9c6f3"/></svg>
<span class="t" style="left:1584.60px;top:1049.65px;font-size:14px;line-height:21px;color:#f1f4f8;letter-spacing:-0.820px;">21°C</span>
<span class="t" style="left:1622.80px;top:1049.65px;font-size:14px;line-height:21px;color:#f1f4f8;letter-spacing:-1.747px;">แจ่มใสส่วนใหญ่</span>
<svg class="b" style="left:1724px;top:1055px;" width="14" height="9" viewBox="0 0 14 9"><path d="M1 7.300L6.900 1.500L12.800 7.300" fill="none" stroke="#fff" stroke-width="1.200"/></svg>
<svg class="b" style="left:1747px;top:1051px;" width="15" height="18" viewBox="0 0 15 18"><rect x="4.300" y="1" width="6.400" height="11.200" rx="3" fill="#fff"/><path d="M2 8.500V9.500Q2 14.300 7.500 14.300Q13 14.300 13 9.500V8.500" fill="none" stroke="#fff" stroke-width="1.100"/><path d="M7.500 14.300V16.500M4.600 16.800H10.400" stroke="#fff" stroke-width="1.100"/></svg>
<span class="t" style="left:1773.60px;top:1051.14px;font-size:12px;line-height:18px;color:#fff;letter-spacing:-1.272px;">ENG</span>
<span class="t" style="left:1813.10px;top:1042.24px;font-size:12px;line-height:18px;color:#fff;letter-spacing:-0.233px;">6:02 AM</span>
<span class="t" style="left:1812.20px;top:1060.04px;font-size:12px;line-height:18px;color:#fff;letter-spacing:-0.127px;">2/3/2026</span>
<svg class="b" style="left:1878px;top:1051px;" width="28" height="28" viewBox="0 0 28 28"><path d="M1.200 1H16.800V11.800H13.500V14.300L10.800 11.800H1.200z" fill="#fff"/><path d="M3.500 4.200H14.500M3.500 6.600H14.500M3.500 9H14.500" stroke="#1d2b45" stroke-width="1.100"/><circle cx="16.500" cy="16.400" r="8.600" fill="#272c3a" stroke="#8d8f96" stroke-width="1.300"/></svg>
<span class="t" style="left:1888.20px;top:1059.12px;font-size:11.5px;line-height:17px;color:#fff;font-weight:700;letter-spacing:-0.098px;">16</span>
<div class="b" style="left:1915px;top:1040px;width:1px;height:40px;background:#8b94a6;"></div>
<svg class="b" style="left:1436px;top:614px;" width="15" height="22" viewBox="0 0 15 22"><path d="M1.200 1.200V17.200L5.200 13.400L8 19.600Q9 20.300 10 19.600Q10.500 19 10.200 18.300L7.600 12.600H13z" fill="#fff" stroke="#111" stroke-width="1.100" stroke-linejoin="round"/></svg>
</body></html>
